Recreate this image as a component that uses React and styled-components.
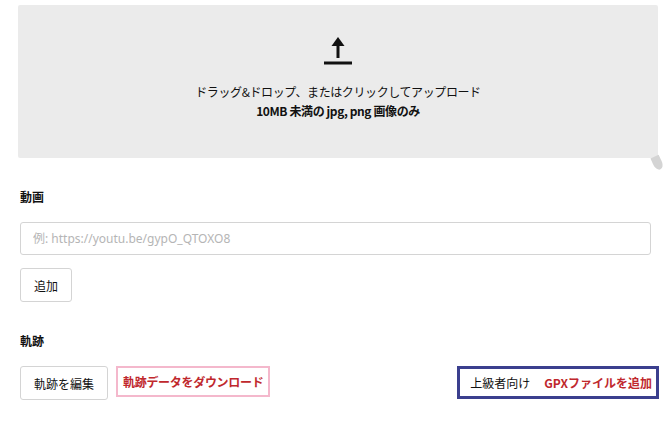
import React from 'react'
import styled, { createGlobalStyle } from 'styled-components'

const GlobalStyle = createGlobalStyle`
    body {
        margin: 0;
        background: #fff;
        font-family: 'Noto Sans CJK JP', 'Noto Sans', sans-serif;
        color: #222;
    }
`

const Page = styled.div`
    width: 663px;
    box-sizing: border-box;
    padding: 5px 8px 0 20px;
`

const DropZone = styled.div`
    position: relative;
    margin: 0 -3px 0 -2px;
    height: 153px;
    box-sizing: border-box;
    background-color: #ebebeb;
    border-radius: 2px;
    display: flex;
    flex-direction: column;
    align-items: center;
    padding-top: 28px;
    cursor: pointer;

    &::after {
        content: '';
        position: absolute;
        right: -4px;
        bottom: -12px;
        width: 9px;
        height: 14px;
        border-radius: 0 0 60% 60%;
        background: #d4d4d4;
        transform: rotate(-25deg);
    }
`

const UploadIcon = styled.svg`
    width: 30px;
    height: 32px;
    margin-bottom: 17px;
`

const DropText = styled.p`
    margin: 0;
    font-size: 12px;
    line-height: 19px;
    letter-spacing: -0.4px;
    font-weight: ${(p) => (p.$bold ? 700 : 400)};
    color: #111;
`

const Section = styled.section`
    margin-top: ${(p) => p.$top || 30}px;
`

const Label = styled.h3`
    margin: 0 0 16px;
    font-size: 12px;
    line-height: 18px;
    font-weight: 700;
    color: #111;
`

const Input = styled.input`
    display: block;
    width: 631px;
    height: 33px;
    box-sizing: border-box;
    border: 1px solid #d4d4d4;
    border-radius: 3px;
    padding: 0 12px;
    font-family: 'Noto Sans', 'Noto Sans CJK JP', sans-serif;
    font-size: 12px;
    color: #333;
    outline: none;

    &::placeholder {
        color: #b5b5b5;
    }
`

const Button = styled.button`
    height: 34px;
    box-sizing: border-box;
    padding: 0 13px;
    background: #fff;
    border: 1px solid #d4d4d4;
    border-radius: 3px;
    font-family: 'Noto Sans CJK JP', sans-serif;
    font-size: 12px;
    color: #111;
    cursor: pointer;
`

const AddRow = styled.div`
    margin-top: 13px;
`

const TrackRow = styled.div`
    display: flex;
    align-items: flex-start;
    gap: 8px;
`

const Download = styled.a`
    display: flex;
    align-items: center;
    height: 31px;
    box-sizing: border-box;
    padding: 0 5px;
    border: 2px solid #f4b8cc;
    font-size: 12px;
    font-weight: 700;
    color: #c0282d;
    letter-spacing: -0.3px;
    cursor: pointer;
`

const Advanced = styled.div`
    margin-left: auto;
    margin-right: -4px;
    display: flex;
    align-items: center;
    gap: 14px;
    height: 33px;
    box-sizing: border-box;
    padding: 0 4px 0 10px;
    border: 3px solid #3b3f8e;
    font-size: 12px;
`

const Plain = styled.span`
    color: #111;
`

const GpxLink = styled.span`
    color: #c0282d;
    font-weight: 700;
    cursor: pointer;
`

function App() {
    return (
        <>
            <GlobalStyle />
            <Page>
                <DropZone>
                    <UploadIcon viewBox="0 0 30 32">
                        <path d="M15 25V7" stroke="#111" strokeWidth="3" fill="none" />
                        <path d="M8.5 13L15 4L21.5 13Z" fill="#111" />
                        <path d="M1 30H29" stroke="#111" strokeWidth="3" />
                    </UploadIcon>
                    <DropText>ドラッグ&amp;ドロップ、またはクリックしてアップロード</DropText>
                    <DropText $bold>10MB 未満の jpg, png 画像のみ</DropText>
                </DropZone>

                <Section>
                    <Label>動画</Label>
                    <Input placeholder="例: https://youtu.be/gypO_QTOXO8" />
                    <AddRow>
                        <Button>追加</Button>
                    </AddRow>
                </Section>

                <Section>
                    <Label>軌跡</Label>
                    <TrackRow>
                        <Button>軌跡を編集</Button>
                        <Download>軌跡データをダウンロード</Download>
                        <Advanced>
                            <Plain>上級者向け</Plain>
                            <GpxLink>GPXファイルを追加</GpxLink>
                        </Advanced>
                    </TrackRow>
                </Section>
            </Page>
        </>
    )
}

export default App
